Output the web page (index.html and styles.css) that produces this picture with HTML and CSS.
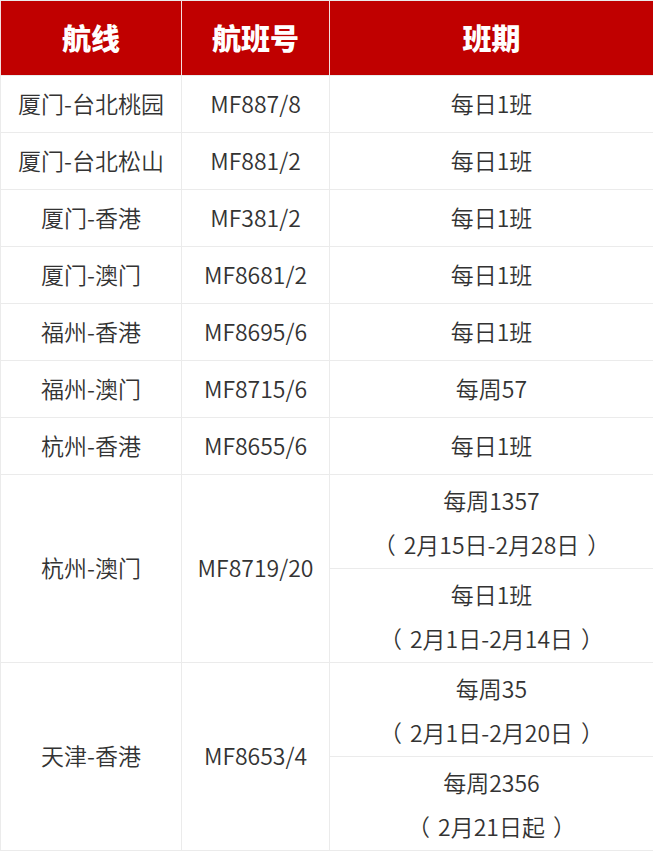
FILE: index.html
```html
<!DOCTYPE html>
<html lang="zh-CN">
<head>
<meta charset="utf-8">
<title>航线班期</title>
<link rel="stylesheet" href="styles.css">
</head>
<body>
<table class="sched">
  <colgroup>
    <col class="c-route">
    <col class="c-flight">
    <col class="c-days">
  </colgroup>
  <thead>
    <tr class="head"><th>航线</th><th>航班号</th><th>班期</th></tr>
  </thead>
  <tbody>
    <tr class="row"><td>厦门-台北桃园</td><td>MF887/8</td><td>每日1班</td></tr>
    <tr class="row"><td>厦门-台北松山</td><td>MF881/2</td><td>每日1班</td></tr>
    <tr class="row"><td>厦门-香港</td><td>MF381/2</td><td>每日1班</td></tr>
    <tr class="row"><td>厦门-澳门</td><td>MF8681/2</td><td>每日1班</td></tr>
    <tr class="row"><td>福州-香港</td><td>MF8695/6</td><td>每日1班</td></tr>
    <tr class="row"><td>福州-澳门</td><td>MF8715/6</td><td>每周57</td></tr>
    <tr class="row"><td>杭州-香港</td><td>MF8655/6</td><td>每日1班</td></tr>
    <tr class="sub"><td rowspan="2">杭州-澳门</td><td rowspan="2">MF8719/20</td><td class="two">每周1357<br><span class="po">（</span>2月15日-2月28日<span class="pc">）</span></td></tr>
    <tr class="sub"><td class="two">每日1班<br><span class="po">（</span>2月1日-2月14日<span class="pc">）</span></td></tr>
    <tr class="sub"><td rowspan="2">天津-香港</td><td rowspan="2">MF8653/4</td><td class="two">每周35<br><span class="po">（</span>2月1日-2月20日<span class="pc">）</span></td></tr>
    <tr class="sub"><td class="two">每周2356<br><span class="po">（</span>2月21日起<span class="pc">）</span></td></tr>
  </tbody>
</table>
</body>
</html>
```
FILE: styles.css
```css
html, body {
  margin: 0;
  padding: 0;
  background: #ffffff;
}

.sched {
  width: 653px;
  border-collapse: collapse;
  table-layout: fixed;
  font-family: "Noto Sans CJK SC DemiLight", "Noto Sans CJK SC Light", "Noto Sans CJK SC", "Noto Sans", sans-serif;
  color: #333333;
}

.c-route { width: 181px; }
.c-flight { width: 148px; }
.c-days { width: 324px; }

.sched th,
.sched td {
  padding: 0 0 3px 0;
  text-align: center;
  vertical-align: middle;
  border: 1px solid #ebebeb;
}

.head th {
  height: 71px;
  background: #c00000;
  color: #ffffff;
  font-family: "Noto Sans CJK SC", sans-serif;
  font-size: 29px;
  font-weight: 900;
  border-left-color: #f4dede;
  border-right-color: #f4dede;
}

.row td {
  height: 53px;
  font-size: 23px;
  font-weight: 300;
}

.sub td {
  height: 90px;
  font-size: 23px;
  font-weight: 300;
  line-height: 44px;
}

.sub td.two {
  padding: 0;
  height: 93px;
}

.po { padding-right: 8px; }
.pc { padding-left: 8px; }
```
